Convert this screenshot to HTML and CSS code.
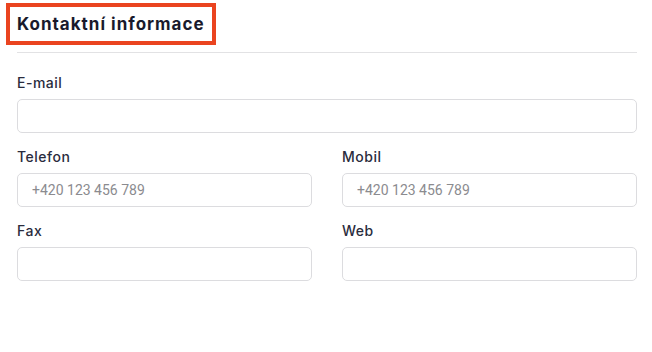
FILE: index.html
```html
<!DOCTYPE html>
<html>
<head>
	<title>Kontaktní informace</title>
	<meta charset="utf-8">
	<meta name="viewport" content="width=device-width, initial-scale=1">
	<link rel="stylesheet" href="styles.css">
</head>
<body>
	<div class="section">
		<div class="section-head">
			<h2 class="section-title">Kontaktní informace</h2>
		</div>

		<div class="form-grid">
			<div class="field field-wide">
				<label class="field-label" for="email">E-mail</label>
				<input class="field-input" id="email" type="email">
			</div>
			<div class="field">
				<label class="field-label" for="phone">Telefon</label>
				<input class="field-input" id="phone" type="tel" placeholder="+420 123 456 789">
			</div>
			<div class="field">
				<label class="field-label" for="mobile">Mobil</label>
				<input class="field-input" id="mobile" type="tel" placeholder="+420 123 456 789">
			</div>
			<div class="field">
				<label class="field-label" for="fax">Fax</label>
				<input class="field-input" id="fax" type="tel">
			</div>
			<div class="field">
				<label class="field-label" for="web">Web</label>
				<input class="field-input" id="web" type="url">
			</div>
		</div>
	</div>
</body>
</html>
```

FILE: styles.css
```css
body
{
	margin: 0px;
	padding: 0px;
	background: white;
	color: #2a2c3d;
	font-family: "Inter", "Noto Sans", sans-serif;
}

.section
{
	padding: 3px 15px 0px 17px;
}

.section-head
{
	padding-bottom: 7px;
	border-bottom: 1px solid #e2e2e4;
}

.section-title
{
	display: inline-block;
	margin: 0px 0px 0px -11px;
	padding: 5px 7px;
	border: 4px solid #ea4420;
	font-size: 17px;
	line-height: 24px;
	font-weight: 700;
	letter-spacing: 1px;
	color: #191a2c;
}

.form-grid
{
	display: grid;
	grid-template-columns: 1fr 1fr;
	column-gap: 30px;
	row-gap: 14px;
	margin-top: 20px;
}

.field
{
	display: flex;
	flex-direction: column;
}

.field-wide {grid-column: 1 / 3;}

.field-label
{
	font-size: 14px;
	line-height: 20px;
	font-weight: 500;
	letter-spacing: 0.5px;
	margin-bottom: 6px;
	color: #2a2c3d;
}

.field-input
{
	box-sizing: border-box;
	height: 34px;
	padding: 0px 14px;
	border: 1px solid #dcdcdf;
	border-radius: 5px;
	background: white;
	font-family: "Roboto", "Inter", sans-serif;
	font-size: 14px;
	color: #2a2c3d;
	outline: none;
}

.field-input::placeholder {color: #8b8b8f;}
```
